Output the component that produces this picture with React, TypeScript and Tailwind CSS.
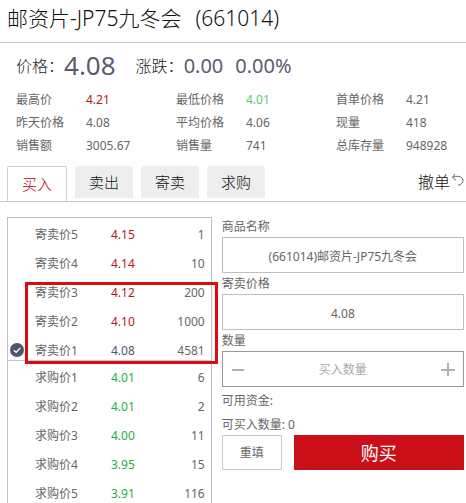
import { useState } from "react";
import clsx from "clsx";

const stats = [
  [
    { label: "最高价", value: "4.21", color: "text-[#b5182b]" },
    { label: "最低价格", value: "4.01", color: "text-[#5cc878]" },
    { label: "首单价格", value: "4.21" },
  ],
  [
    { label: "昨天价格", value: "4.08" },
    { label: "平均价格", value: "4.06" },
    { label: "现量", value: "418" },
  ],
  [
    { label: "销售额", value: "3005.67" },
    { label: "销售量", value: "741" },
    { label: "总库存量", value: "948928" },
  ],
];

const tabs = ["买入", "卖出", "寄卖", "求购"];

const sellRows = [
  { label: "寄卖价5", price: "4.15", amount: 1 },
  { label: "寄卖价4", price: "4.14", amount: 10 },
  { label: "寄卖价3", price: "4.12", amount: 200 },
  { label: "寄卖价2", price: "4.10", amount: 1000 },
  { label: "寄卖价1", price: "4.08", amount: 4581, selected: true },
];

const buyRows = [
  { label: "求购价1", price: "4.01", amount: 6 },
  { label: "求购价2", price: "4.01", amount: 2 },
  { label: "求购价3", price: "4.00", amount: 11 },
  { label: "求购价4", price: "3.95", amount: 15 },
  { label: "求购价5", price: "3.91", amount: 116 },
];

const CheckBadge = () => (
  <svg viewBox="0 0 14 14" className="size-3.5" aria-hidden="true">
    <circle cx="7" cy="7" r="7" fill="#4d566e" />
    <path d="M3.8 7.2 6.1 9.3 10.4 4.9" fill="none" stroke="#fff" strokeWidth="1.3" />
  </svg>
);

type RowType = {
  label: string;
  price: string;
  amount: number;
  selected?: boolean;
};

const PriceRow = ({
  row,
  priceColor,
  height,
}: {
  row: RowType;
  priceColor: string;
  height: string;
}) => (
  <tr className={clsx("align-bottom leading-[18px]", height)}>
    <td className="w-[27px] p-0 pb-[3px] pl-0.5">{row.selected && <CheckBadge />}</td>
    <th scope="row" className="w-[76px] p-0 text-left font-normal">
      {row.label}
    </th>
    <td className={clsx("p-0", row.selected ? "text-[#4d566e]" : priceColor)}>{row.price}</td>
    <td className="p-0 pr-1.5 text-right">{row.amount}</td>
  </tr>
);

const Field = ({ id, label, value }: { id: string; label: string; value: string }) => (
  <div>
    <label htmlFor={id} className="block leading-5">
      {label}
    </label>
    <input
      id={id}
      defaultValue={value}
      className="block h-9 w-full border border-[#bfbfbf] bg-white pt-0.5 text-center outline-none"
    />
  </div>
);

const App = () => {
  const [activeTab, setActiveTab] = useState(0);
  const [quantity, setQuantity] = useState("");

  const step = (n: number) => setQuantity(String(Math.max(0, Number(quantity) + n)));

  return (
    <main
      lang="zh-CN"
      className="overflow-hidden bg-white font-['Noto_Sans','Noto_Sans_CJK_SC',sans-serif] text-xs text-[#666]"
    >
      <h1 className="flex h-[43px] gap-3.5 border-b border-[#c8c8c8] pl-[7px] text-[21px] leading-9 font-light text-[#111]">
        <span>邮资片-JP75九冬会</span>
        <span>(661014)</span>
      </h1>

      <div className="flex h-[45px] items-center pl-4 text-base text-[#222]">
        <span className="font-light">价格：</span>
        <span className="text-[26px] text-[#5c5c6e]">4.08</span>
        <span className="ml-5 font-light">涨跌：</span>
        <span className="text-xl text-[#5c5c6e]">0.00</span>
        <span className="ml-3 text-xl text-[#5c5c6e]">0.00%</span>
      </div>

      <table className="ml-4 w-[calc(100%-16px)] table-fixed">
        <tbody>
          {stats.map((row, i) => (
            <tr key={i} className="h-[23px]">
              {row.map(({ label, value, color }, j) => [
                <th key={label} scope="row" className="w-[70px] p-0 text-left font-normal">
                  {label}
                </th>,
                <td key={label + "-value"} className={clsx("p-0", j < 2 && "w-[20%]", color)}>
                  {value}
                </td>,
              ])}
            </tr>
          ))}
        </tbody>
      </table>

      <nav className="mt-[9px] flex h-9 items-start gap-2 border-b border-[#c8c8c8] pl-[7px]">
        {tabs.map((tab, i) => (
          <button
            key={tab}
            onClick={() => setActiveTab(i)}
            className={clsx(
              "rounded-t-xs text-[15px] font-light",
              i === activeTab
                ? "h-[35px] w-[60px] border border-b-0 border-[#d0d0d0] bg-white text-[#b5000f]"
                : "h-8 w-[58px] bg-[#eee] text-[#111]"
            )}
          >
            {tab}
          </button>
        ))}
        <button className="ml-auto flex h-8 items-center text-base font-light text-[#111]">
          撤单
          <svg viewBox="0 0 16 16" className="mb-1 size-4" fill="none" stroke="#666" aria-hidden="true">
            <path d="M5 2 2.500 5.300 6 8.300M2.500 5.300C6 3.700 12.500 3.600 13 8.300c.2 2.800-2 4.400-5 4.900" />
          </svg>
        </button>
      </nav>

      <div className="flex gap-2.5 pt-[15px] pr-0.5 pl-[7px]">
        <section className="relative w-[44.8%] shrink-0 border border-b-0 border-[#c0c0c0]">
          <table className="w-full border-collapse">
            <tbody className="border-b border-[#c8c8c8]">
              {sellRows.map((row, i) => (
                <PriceRow
                  key={row.label}
                  row={row}
                  priceColor="text-[#b5182b]"
                  height={i === 0 ? "h-[26px]" : "h-[29px]"}
                />
              ))}
            </tbody>
            <tbody>
              {buyRows.map((row, i) => (
                <PriceRow
                  key={row.label}
                  row={row}
                  priceColor="text-[#23b14d]"
                  height={i === 0 ? "h-[27px]" : "h-[29px]"}
                />
              ))}
            </tbody>
          </table>
          {/* highlight over the last three sell prices */}
          <div className="pointer-events-none absolute top-16 -right-[7px] left-[17px] h-[82px] border-3 border-[#dc0a12]" />
        </section>

        <form className="flex min-w-0 flex-1 flex-col gap-px" onSubmit={(e) => e.preventDefault()}>
          <Field id="name" label="商品名称" value="(661014)邮资片-JP75九冬会" />
          <Field id="price" label="寄卖价格" value="4.08" />
          <div>
            <label htmlFor="quantity" className="block leading-5">
              数量
            </label>
            <div className="flex h-9 items-center border border-[#999] px-2">
              <button type="button" aria-label="减少" onClick={() => step(-1)}>
                <svg viewBox="0 0 14 14" className="size-3.5" stroke="#b0b0b0" strokeWidth="2">
                  <path d="M1 8h12" />
                </svg>
              </button>
              <input
                id="quantity"
                value={quantity}
                onChange={(e) => setQuantity(e.target.value)}
                placeholder="买入数量"
                className="h-full min-w-0 flex-1 text-center outline-none placeholder:text-[#aaa]"
              />
              <button type="button" aria-label="增加" onClick={() => step(1)}>
                <svg viewBox="0 0 14 14" className="size-3.5" stroke="#b0b0b0" strokeWidth="2">
                  <path d="M0 8h14M7 1v13" />
                </svg>
              </button>
            </div>
          </div>
          <div className="flex flex-col gap-1.5 pt-1 leading-[18px]">
            <p>可用资金:</p>
            <p>可买入数量: 0</p>
          </div>
          <div className="flex gap-3">
            <button
              type="reset"
              onClick={() => setQuantity("")}
              className="h-[35px] w-[60px] border border-[#c8c8c8] bg-white"
            >
              重填
            </button>
            <button type="submit" className="h-[35px] flex-1 bg-[#cb0f18] text-lg text-white">
              购买
            </button>
          </div>
        </form>
      </div>
    </main>
  );
};

export default App;
